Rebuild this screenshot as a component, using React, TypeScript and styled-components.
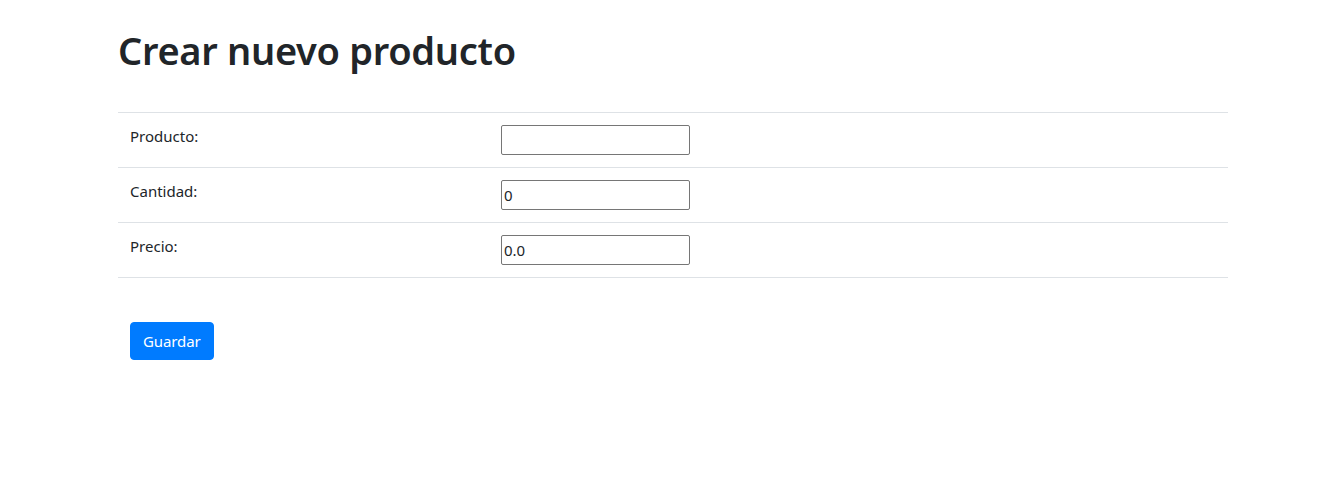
import styled, { createGlobalStyle } from "styled-components";

const GlobalStyle = createGlobalStyle`
  body {
    margin: 0;
    font-family: "Noto Sans", "Open Sans", Arial, sans-serif;
    font-size: 16px;
    line-height: 1.5;
    color: #212529;
    background: #fff;
  }
  * {
    box-sizing: border-box;
  }
`;

interface Field {
  label: string;
  value: string;
}

const fields: Field[] = [
  { label: "Producto:", value: "" },
  { label: "Cantidad:", value: "0" },
  { label: "Precio:", value: "0.0" },
];

export default function App() {
  return (
    <>
      <GlobalStyle />
      <Container>
        <Title>Crear nuevo producto</Title>
        <FormTable>
          {fields.map((f) => (
            <Row key={f.label}>
              <LabelCell>{f.label}</LabelCell>
              <InputCell>
                <TextInput type="text" defaultValue={f.value} />
              </InputCell>
            </Row>
          ))}
        </FormTable>
        <Actions>
          <SaveButton type="button">Guardar</SaveButton>
        </Actions>
      </Container>
    </>
  );
}

const Container = styled.div`
  width: 1110px;
  margin: 0 0 0 118px;
  padding-top: 26px;
`;
const Title = styled.h1`
  margin: 0 0 38px;
  font-size: 38px;
  font-weight: 600;
  line-height: 48px;
  letter-spacing: -0.3px;
`;
const FormTable = styled.div`
  border-top: 1px solid #dee2e6;
`;
const Row = styled.div`
  display: grid;
  grid-template-columns: 371px 1fr;
  border-bottom: 1px solid #dee2e6;
`;
const LabelCell = styled.div`
  padding: 12px;
  font-size: 15px;
`;
const InputCell = styled.div`
  padding: 12px;
`;
const TextInput = styled.input`
  display: block;
  width: 189px;
  height: 30px;
  padding: 1px 2px;
  border: 1px solid #767676;
  border-radius: 2px;
  font-family: inherit;
  font-size: 15px;
  color: #212529;
`;
const Actions = styled.div`
  padding: 44px 12px 0;
`;
const SaveButton = styled.button`
  height: 38px;
  padding: 0 12px;
  border: 1px solid #007bff;
  border-radius: 4px;
  background: #007bff;
  color: #fff;
  font-family: inherit;
  font-size: 15px;
  letter-spacing: -0.1px;
  cursor: pointer;
`;
